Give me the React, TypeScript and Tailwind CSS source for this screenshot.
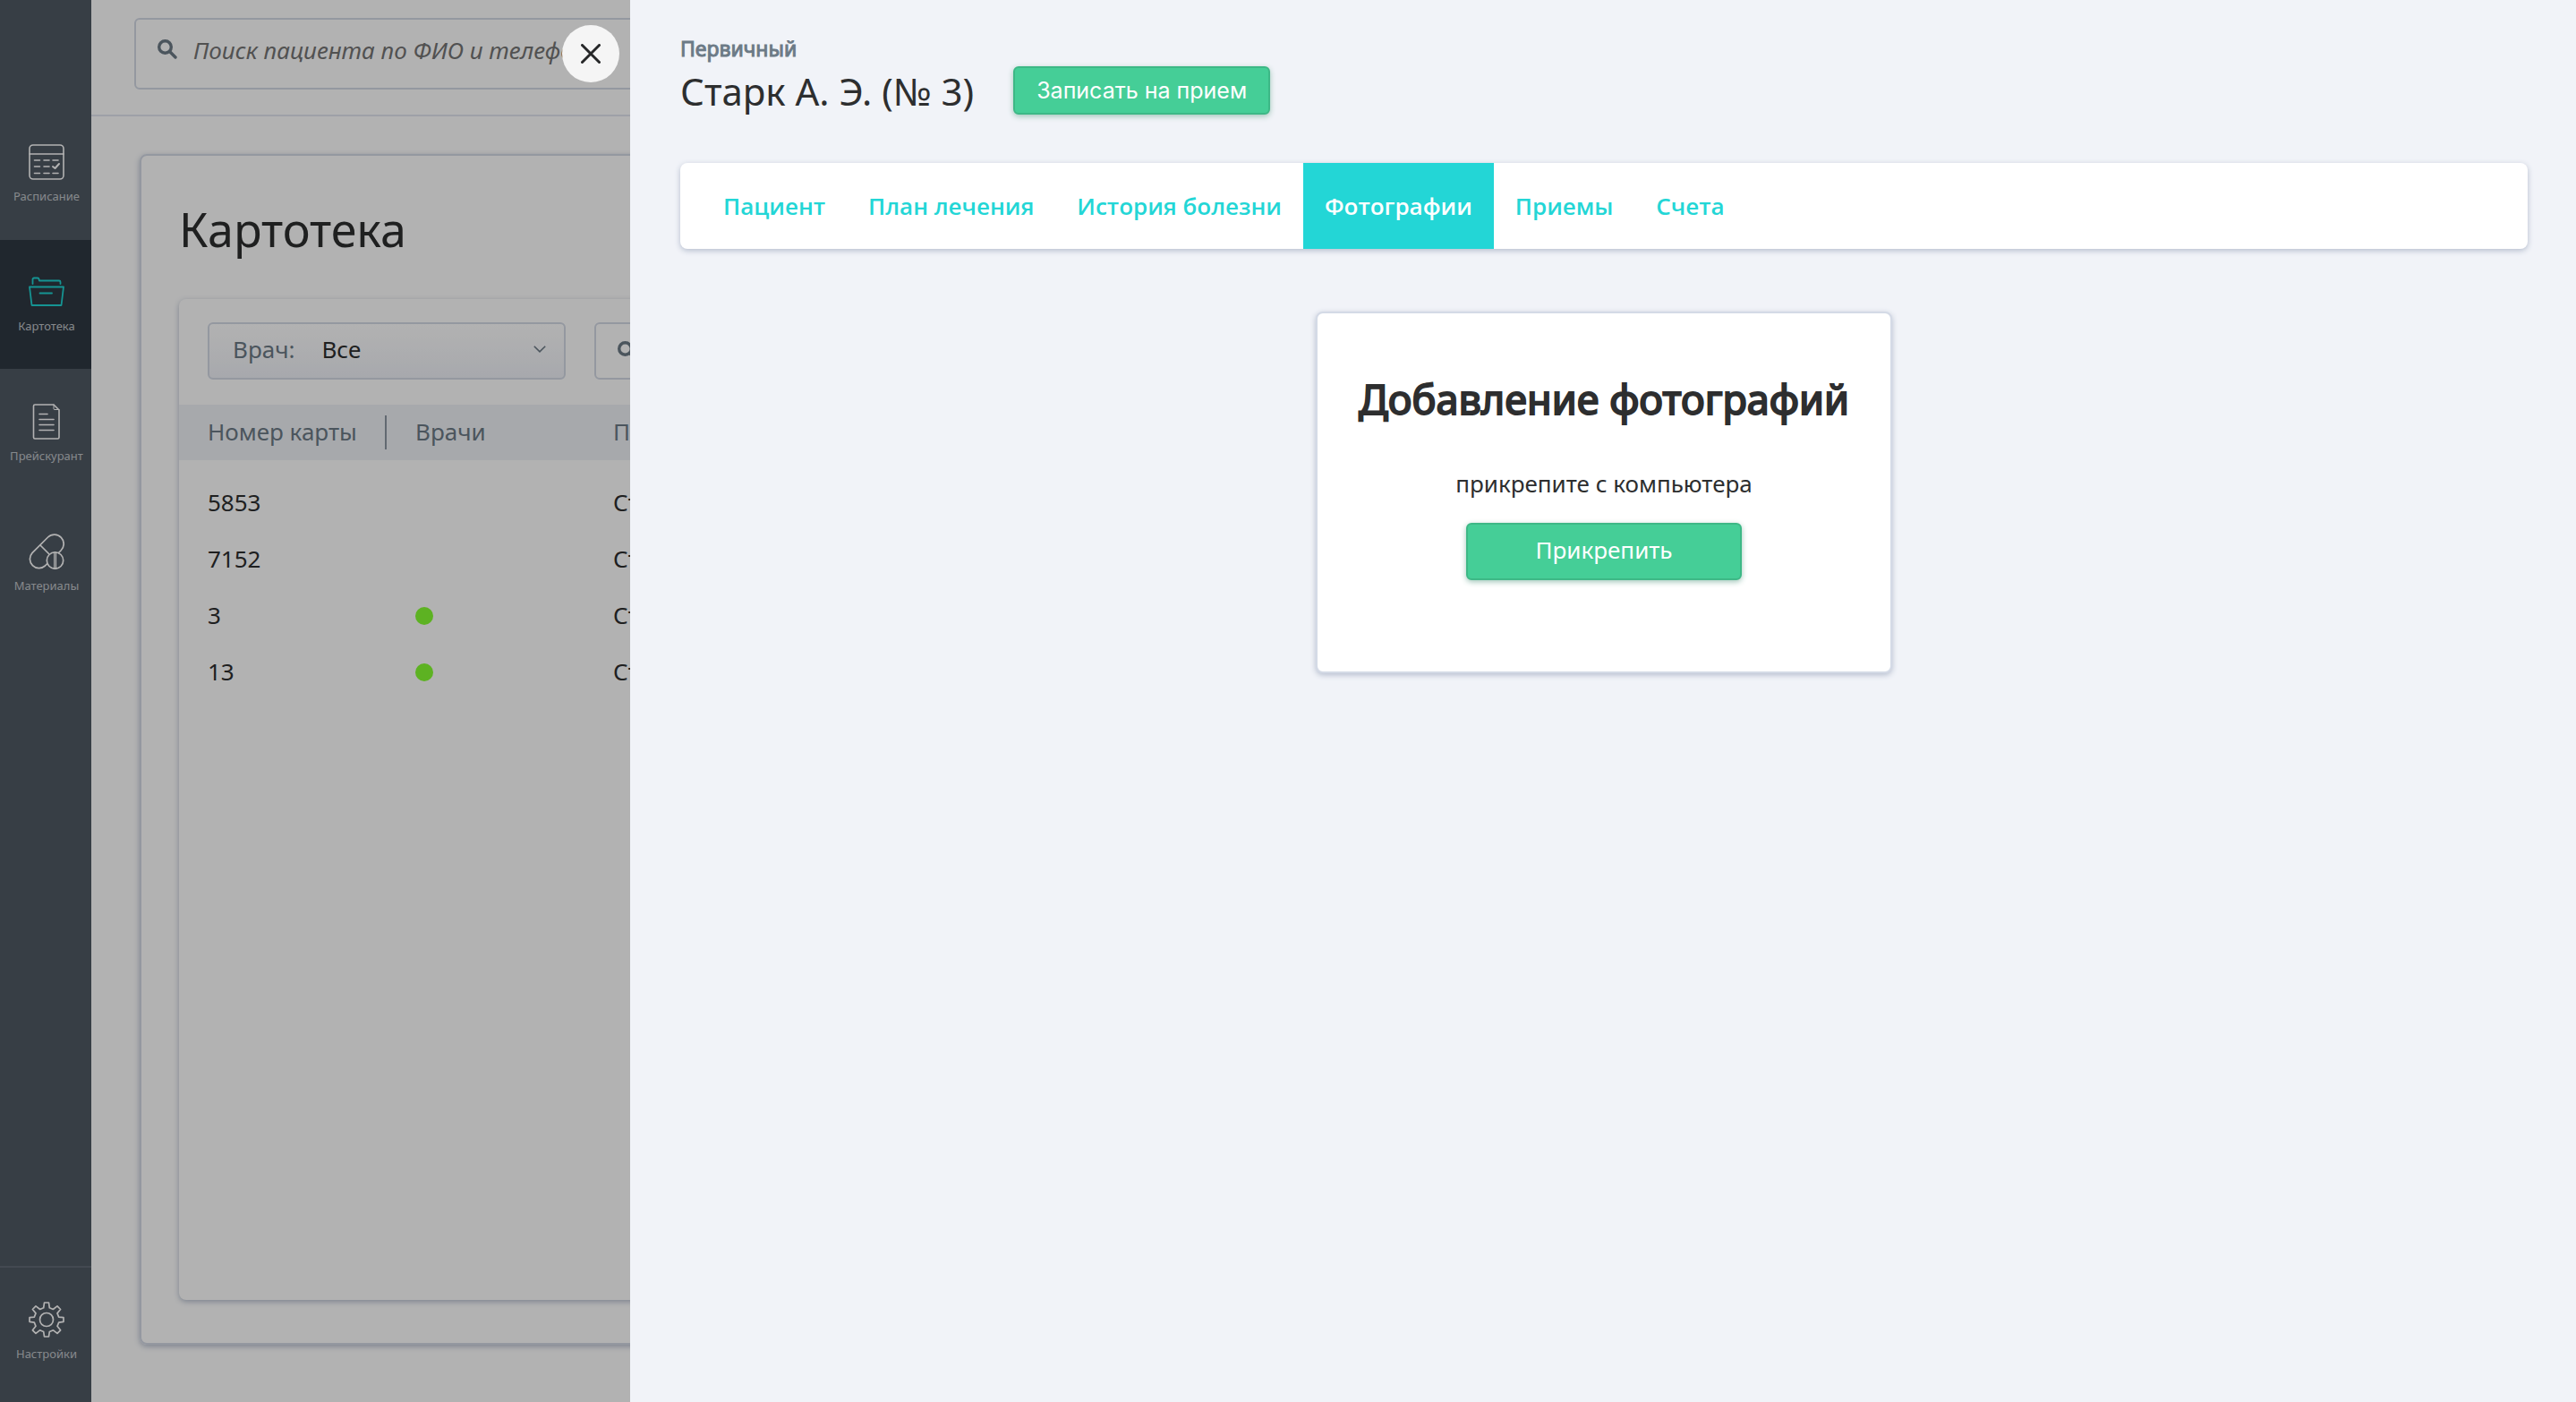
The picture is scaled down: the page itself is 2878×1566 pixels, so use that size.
import type { ReactNode } from "react";

function CalendarIcon() {
  return (
    <svg width="40" height="40" viewBox="0 0 40 40" fill="none" stroke="currentColor" strokeWidth="1.6" strokeLinecap="round" strokeLinejoin="round">
      <rect x="1" y="1" width="38" height="38" rx="4" />
      <path d="M1 11H39M6.500 18h6M17 18h6M27 18h6M6.500 25h6M17 25h6M6.500 32.500h6M17 32.500h6M27 32.500h6" />
      <path d="M27 25l2.500 2 4.500-5" strokeWidth="2" />
    </svg>
  );
}

function FolderIcon() {
  return (
    <svg width="40" height="40" viewBox="0 0 40 40" fill="none" stroke="currentColor" strokeWidth="1.800" strokeLinecap="round" strokeLinejoin="round">
      <path d="M4.500 11V6a1.500 1.500 0 0 1 1.500-1.500h4a1.500 1.500 0 0 1 1.500 1.300l.4 1.700H34a1.500 1.500 0 0 1 1.500 1.500v2" />
      <path d="M1 14.500H39L36.500 35H3.500Z" />
      <path d="M12.500 21.500H26" />
    </svg>
  );
}

function DocumentIcon() {
  return (
    <svg width="40" height="40" viewBox="0 0 40 40" fill="none" stroke="currentColor" strokeWidth="1.600" strokeLinecap="round" strokeLinejoin="round">
      <path d="M7 1H28L34 7V37.500a1.500 1.500 0 0 1-1.500 1.500H7a1.500 1.500 0 0 1-1.500-1.500V2.500A1.500 1.500 0 0 1 7 1Z" />
      <path d="M28 1v4.500a1 1 0 0 0 1 1H34" strokeWidth="1" />
      <path d="M12 11.500h9M12 17.500h16M12 23.500h16M12 29.500h16" />
    </svg>
  );
}

function PillsIcon() {
  return (
    <svg width="40" height="40" viewBox="0 0 40 40" fill="none" stroke="currentColor" strokeWidth="1.700" strokeLinecap="round">
      <path d="M33.500 21.500l2.500-2.500A10.200 10.200 0 0 0 21.600 4L4 21.600A10.200 10.200 0 0 0 18.400 36l2.100-2.100" />
      <path d="M13 13l9.500 9.500" />
      <circle cx="29.500" cy="30" r="9.200" />
      <path d="M28.700 21v18M30.500 21v18" strokeWidth="1.200" />
    </svg>
  );
}

function GearIcon() {
  return (
    <svg width="40" height="40" viewBox="0 0 40 40" fill="none" stroke="currentColor" strokeWidth="1.700" strokeLinejoin="round">
      <circle cx="20" cy="20" r="7.500" />
      <path d="M17.500 1h5l.8 5.800 4 1.700 4.700-3.600 3.600 3.600-3.600 4.400 1.700 4.200 5.300.6v4.600l-5.300.9-1.700 4.100 3.600 4.500-3.600 3.600-4.500-3.600-4.200 1.700-.8 5.500h-5l-.8-5.500-4.200-1.700-4.500 3.600-3.600-3.600 3.600-4.500-1.700-4.100-5.300-.9v-4.600l5.300-.6 1.700-4.200-3.600-4.400 3.600-3.600 4.700 3.600 4-1.700Z" />
    </svg>
  );
}

function SearchIcon() {
  return (
    <svg className="shrink-0" width="22" height="22" viewBox="0 0 22 22" fill="none" stroke="currentColor" strokeWidth="3.400" strokeLinecap="round">
      <circle cx="8.500" cy="8.500" r="6.800" />
      <path d="M13.800 13.800l6.200 6.200" />
    </svg>
  );
}

function NavItem({ icon, label, active = false }: { icon: ReactNode; label: string; active?: boolean }) {
  return (
    <a
      href="#"
      className={
        active
          ? "flex h-36 flex-col items-center bg-[#2f3842] pt-[38px] pl-0.5 text-[#1fd5d3]"
          : "flex h-36 flex-col items-center pt-[38px] pl-0.5 text-white"
      }
    >
      {icon}
      <span className="mt-2 text-[13px] leading-5 text-[#c0c4c9]">{label}</span>
    </a>
  );
}

const patients = [
  { card: "5853", name: "Старк", doctor: false },
  { card: "7152", name: "Старк", doctor: false },
  { card: "3", name: "Старк", doctor: true },
  { card: "13", name: "Старк", doctor: true },
];

const tabs = ["Пациент", "План лечения", "История болезни", "Фотографии", "Приемы", "Счета"];

function Sidebar() {
  return (
    <nav className="flex w-[102px] shrink-0 flex-col justify-between bg-[#505964]">
      <div className="flex flex-col gap-px pt-[123px]">
        <NavItem icon={<CalendarIcon />} label="Расписание" />
        <NavItem icon={<FolderIcon />} label="Картотека" active />
        <NavItem icon={<DocumentIcon />} label="Прейскурант" />
        <NavItem icon={<PillsIcon />} label="Материалы" />
      </div>
      <div className="border-t-2 border-[#616975] pb-1.5">
        <NavItem icon={<GearIcon />} label="Настройки" />
      </div>
    </nav>
  );
}

function CardIndex() {
  return (
    <div className="flex min-w-0 flex-1 flex-col bg-white">
      <header className="border-b-2 border-[#e3e6f0] px-12 pt-5 pb-7">
        <label className="flex h-20 items-start gap-[18px] rounded-md border-2 border-[#d4dae6] pt-4 pl-6 text-[#6c7a86]">
          <span className="pt-1.5">
            <SearchIcon />
          </span>
          <input
            type="search"
            aria-label="Поиск пациента"
            placeholder="Поиск пациента по ФИО и телефону"
            className="h-9 flex-1 bg-transparent text-[26px] italic text-[#2d2d2e] outline-none placeholder:text-[#757575]"
          />
        </label>
      </header>
      <section className="mx-[54px] mt-[42px] mb-16 flex flex-1 flex-col rounded-lg border-2 border-[#d4dae6] px-[42px] pt-[52px] pb-12 shadow-[0_2px_6px_#b4bccd]">
        <h1 className="text-[52px] leading-[60px] text-[#2d2e2f]">Картотека</h1>
        <div className="mt-12 flex flex-1 flex-col rounded-lg shadow-[0_2px_6px_#b4bccd]">
          <div className="flex gap-8 px-8 pt-[26px] pb-7">
            <label className="flex h-16 w-[400px] items-center rounded-md border-2 border-[#d4dae6] bg-linear-to-b from-white to-[#f0f2f8] pr-5 pb-1 pl-[26px] text-[26px] text-[#6c7a86]">
              Врач:
              <select className="ml-[30px] h-full flex-1 appearance-none bg-transparent text-[#2d2e2f] outline-none">
                <option>Все</option>
              </select>
              <svg width="14" height="8" viewBox="0 0 14 8" fill="none" stroke="currentColor" strokeWidth="1.6">
                <path d="M.8 .8L7 6.800l6.200-6" />
              </svg>
            </label>
            <label className="flex h-16 flex-1 items-center gap-4 rounded-md border-2 border-[#d4dae6] pl-6 text-[#6c7a86]">
              <SearchIcon />
              <input type="search" aria-label="Поиск по картотеке" className="h-full flex-1 bg-transparent text-[26px] outline-none" />
            </label>
          </div>
          <table className="w-full table-fixed text-left text-[26px] text-[#2d2e2f]">
            <colgroup>
              <col className="w-[232px]" />
              <col className="w-[253px]" />
              <col />
            </colgroup>
            <thead className="bg-[#f0f3f6] text-[#6c7a86]">
              <tr className="h-[62px]">
                <th className="py-0 pl-8 font-normal">
                  <span className="flex h-[38px] items-center border-r-2 border-[#8d97a3] pb-0.5">Номер карты</span>
                </th>
                <th className="pt-0 pb-0.5 pl-8 font-normal">Врачи</th>
                <th className="pt-0 pb-0.5 font-normal">Пациент</th>
              </tr>
            </thead>
            <tbody className="before:block before:h-4">
              {patients.map((p) => (
                <tr key={p.card} className="h-[63px]">
                  <td className="pl-8">{p.card}</td>
                  <td className="pl-8">{p.doctor && <span className="block size-5 rounded-full bg-[#86ff32]" />}</td>
                  <td>{p.name}</td>
                </tr>
              ))}
            </tbody>
          </table>
        </div>
      </section>
    </div>
  );
}

function PatientDrawer() {
  return (
    <div className="fixed inset-0 flex">
      <div className="flex w-[704px] shrink-0 items-start justify-end bg-black/30 pt-7 pr-3">
        <button type="button" aria-label="Закрыть" className="flex size-16 items-center justify-center rounded-full bg-[#f5f5f5] text-[#262728]">
          <svg width="22" height="22" viewBox="0 0 22 22" fill="none" stroke="currentColor" strokeWidth="3" strokeLinecap="round">
            <path d="M1.500 1.500l19 19M20.500 1.500l-19 19" />
          </svg>
        </button>
      </div>
      <aside className="flex min-w-0 flex-1 flex-col bg-[#f1f3f8] pt-[38px] pr-[54px] pl-14 text-[#2d2e2f]">
        <p className="text-[23px] leading-8 text-[#6c7a86] [-webkit-text-stroke:1px]">Первичный</p>
        <div className="mt-1 flex items-center gap-[44px]">
          <h2 className="pt-0.5 text-[42px] leading-[52px]">Старк А. Э. (№ 3)</h2>
          <button type="button" className="h-[54px] rounded-md border-2 border-[#3db886] bg-[#45ce97] px-6 pt-0.5 font-['Inter',sans-serif] text-[25px] text-white shadow-[0_2px_6px_#9fc5b8]">
            Записать на прием
          </button>
        </div>
        <nav className="mt-[54px] flex h-24 rounded-lg bg-white px-6 font-['Open_Sans',sans-serif] text-[26px] font-semibold text-[#23d6d6] shadow-[0_2px_6px_#b4bccd]">
          {tabs.map((tab) => (
            <a
              key={tab}
              href="#"
              className={tab === "Фотографии" ? "flex items-center bg-[#23d6d6] px-6 text-white" : "flex items-center px-6"}
            >
              {tab}
            </a>
          ))}
        </nav>
        <section className="mt-[70px] flex h-[404px] flex-col items-center self-center rounded-lg border-2 border-[#d4dae6] bg-white px-[46px] pt-[68px] shadow-[0_2px_6px_#b4bccd]">
          <h3 className="text-[45px] leading-[56px] [-webkit-text-stroke:2px]">Добавление фотографий</h3>
          <p className="mt-12 text-[26px] leading-9">прикрепите с компьютера</p>
          <button type="button" className="mt-[26px] h-16 w-[308px] rounded-md border-2 border-[#3db886] bg-[#45ce97] pb-1 text-[26px] text-white shadow-[0_2px_6px_#9fc5b8]">
            Прикрепить
          </button>
        </section>
      </aside>
    </div>
  );
}

export default function App() {
  return (
    <div className="flex min-h-screen font-['Noto_Sans','Open_Sans',sans-serif]">
      <Sidebar />
      <CardIndex />
      <PatientDrawer />
    </div>
  );
}
